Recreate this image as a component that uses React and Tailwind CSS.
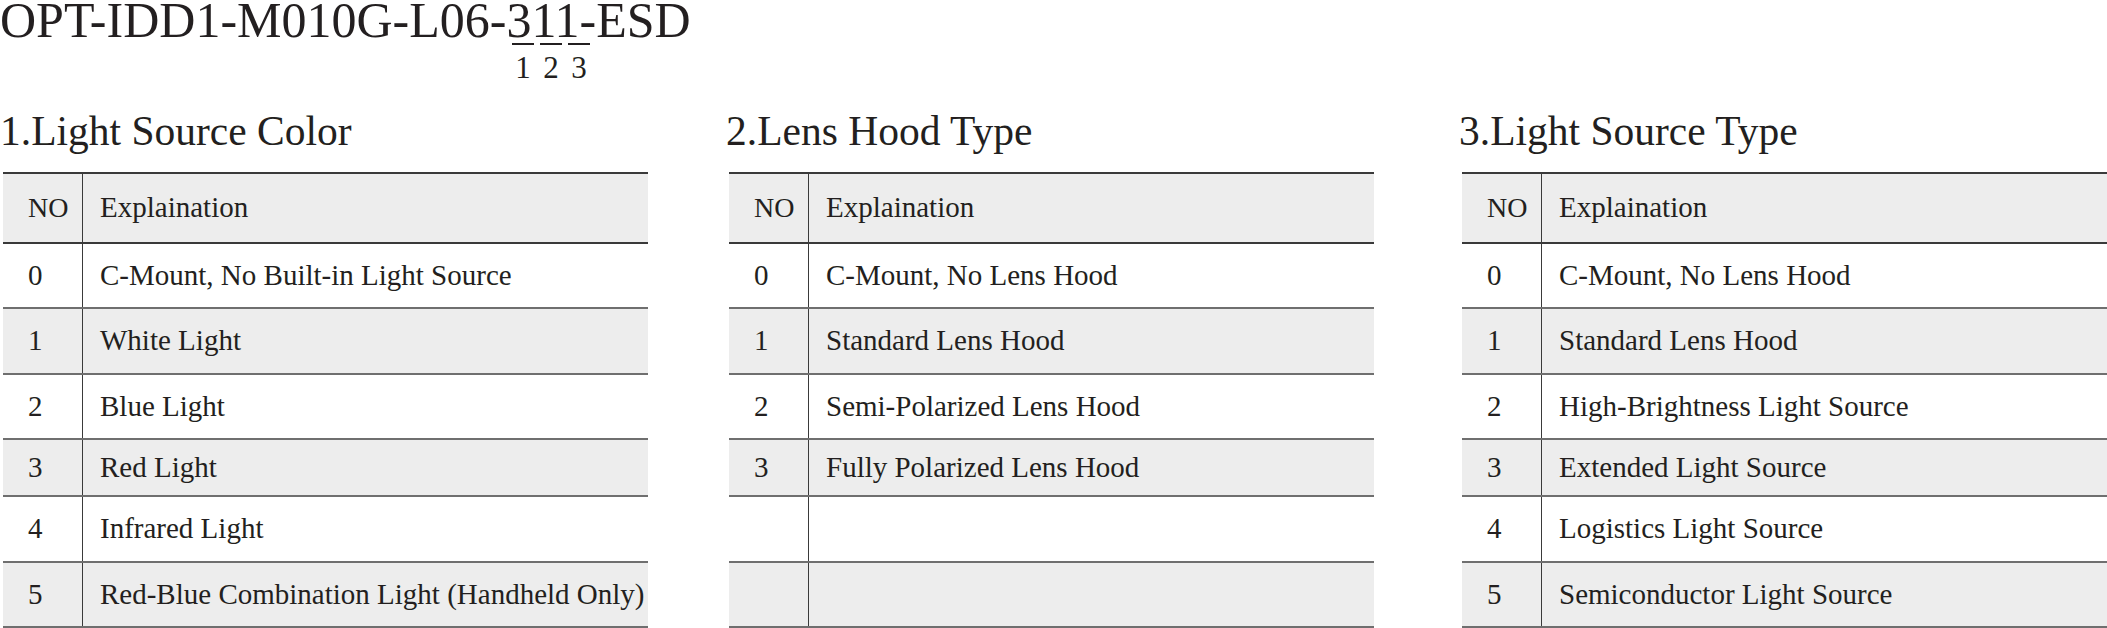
import React from "react";

const sections = [
  {
    title: "1.Light Source Color",
    gap: "ml-[3px]",
    rows: [
      "C-Mount, No Built-in Light Source",
      "White Light",
      "Blue Light",
      "Red Light",
      "Infrared Light",
      "Red-Blue Combination Light (Handheld Only)",
    ],
  },
  {
    title: "2.Lens Hood Type",
    gap: "ml-[81px]",
    rows: [
      "C-Mount, No Lens Hood",
      "Standard Lens Hood",
      "Semi-Polarized Lens Hood",
      "Fully Polarized Lens Hood",
      null,
      null,
    ],
  },
  {
    title: "3.Light Source Type",
    gap: "ml-[88px]",
    rows: [
      "C-Mount, No Lens Hood",
      "Standard Lens Hood",
      "High-Brightness Light Source",
      "Extended Light Source",
      "Logistics Light Source",
      "Semiconductor Light Source",
    ],
  },
];

// row heights incl. bottom rule, taken from the sheet
const rowH = ["h-[65px]", "h-[66px]", "h-[65px]", "h-[57px]", "h-[66px]", "h-[65px]"];

function CodeTable({ title, rows, gap }) {
  return (
    <div className={`flex flex-col w-[645px] ${gap}`}>
      <div className="h-[72px] text-[41.5px] leading-[62px] whitespace-nowrap -ml-[3px]">{title}</div>
      <div className="border-t-2 border-[#3a3a3a]">
        <div className="flex h-[70px] bg-[#ededed] border-b-2 border-[#3a3a3a]">
          <div className="w-[80px] flex items-center pl-[25px] border-r-[1.5px] border-[#3a3a3a] text-[28px]">NO</div>
          <div className="flex-1 flex items-center pl-[17px] text-[29px]">Explaination</div>
        </div>
        {rows.map((text, i) => (
          <div
            key={i}
            className={`flex ${rowH[i]} border-b-2 border-[#6f6f6f] ${
              i % 2 === 1 ? "bg-[#ededed]" : "bg-white"
            }`}
          >
            <div className="w-[80px] flex items-center pl-[25px] border-r-[1.5px] border-[#3a3a3a] text-[29px]">
              {text ? i : ""}
            </div>
            <div className="flex-1 flex items-center pl-[17px] whitespace-nowrap text-[29px]">{text}</div>
          </div>
        ))}
      </div>
    </div>
  );
}

export default function App() {
  return (
    <div className="w-[2107px] h-[628px] overflow-hidden bg-white text-[#231f20] [font-family:'Liberation_Serif','Times_New_Roman',serif]">
      <div className="h-[100px] pt-[1px]">
        <div className="text-[50px] leading-[38px] whitespace-nowrap">OPT-IDD1-M010G-L06-311-ESD</div>
        <div className="flex gap-[6px] ml-[512px] mt-[4px]">
          {["1", "2", "3"].map((n) => (
            <div key={n} className="flex flex-col items-center w-[22px]">
              <div className="w-[22px] h-[2px] bg-[#231f20]" />
              <span className="text-[31px] leading-[34px] mt-[6px]">{n}</span>
            </div>
          ))}
        </div>
      </div>
      <div className="flex">
        {sections.map((s) => (
          <CodeTable key={s.title} {...s} />
        ))}
      </div>
    </div>
  );
}
